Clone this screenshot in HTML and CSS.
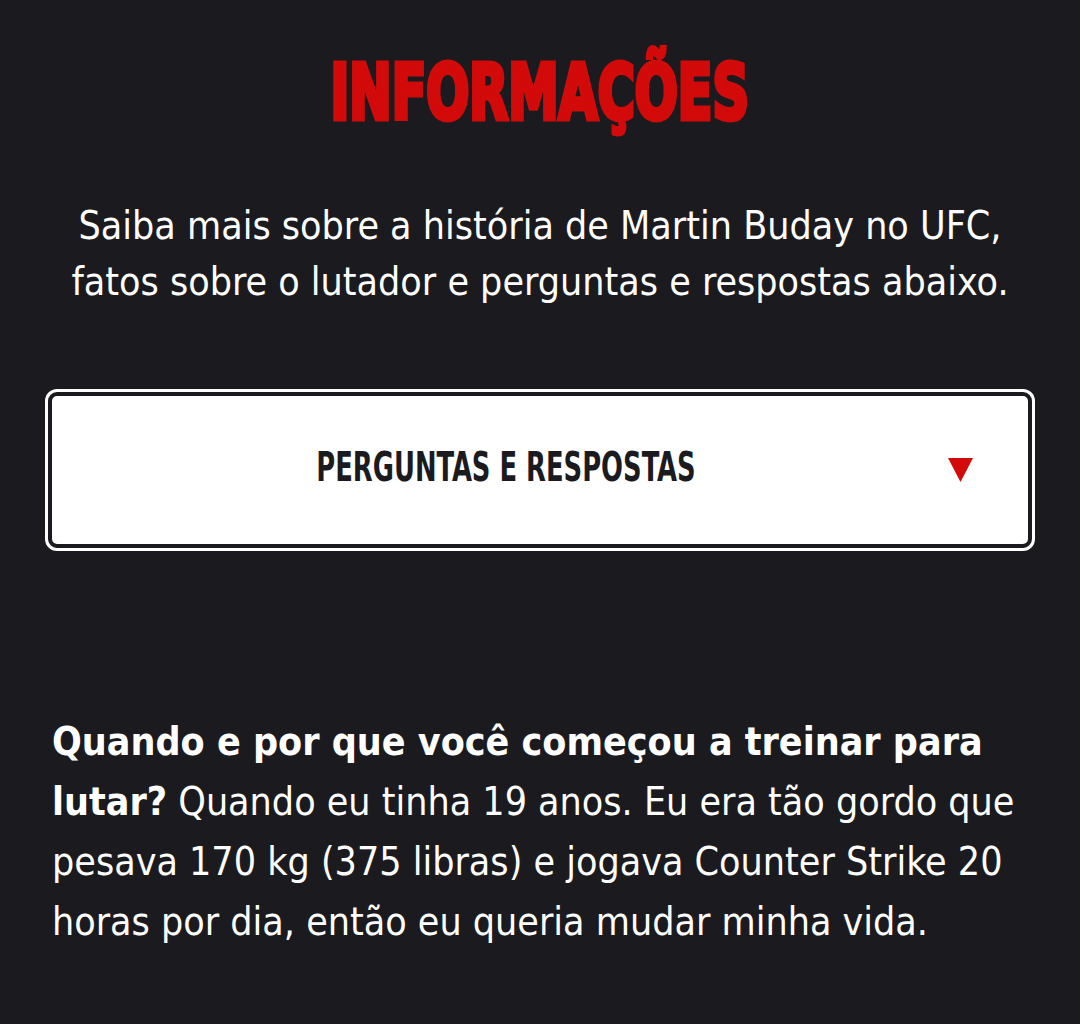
FILE: index.html
```html
<!DOCTYPE html>
<html lang="pt-BR">
<head>
<meta charset="utf-8">
<title>Informações</title>
<link rel="stylesheet" href="styles.css">
</head>
<body>
<main class="info">
  <h2 class="info-title"><span class="info-title-text">INFORMAÇÕES</span></h2>
  <p class="info-intro">Saiba mais sobre a história de Martin Buday no UFC, fatos sobre o lutador e perguntas e respostas abaixo.</p>
  <button class="accordion" type="button">
    <span class="accordion-label">PERGUNTAS E RESPOSTAS</span>
    <svg class="accordion-arrow" viewBox="0 0 25 24" width="25" height="24" aria-hidden="true">
      <polygon points="0,0 25,0 12.5,24" fill="#d20a0a"/>
    </svg>
  </button>
  <p class="qa"><strong>Quando e por que você começou a treinar para lutar?</strong> Quando eu tinha 19 anos. Eu era tão gordo que pesava 170 kg (375 libras) e jogava Counter Strike 20 horas por dia, então eu queria mudar minha vida.</p>
</main>
</body>
</html>
```
FILE: styles.css
```css
html, body {
  margin: 0;
  background: #1b1b1f;
}

body {
  color: #ffffff;
  font-family: "DejaVu Sans Condensed", "DejaVu Sans", sans-serif;
  font-stretch: condensed;
}

.info {
  padding: 55px 48px 60px;
  display: flex;
  flex-direction: column;
}

/* heavy, narrow display heading */
.info-title {
  margin: 0;
  text-align: center;
  color: #d20a0a;
  font-size: 76px;
  font-weight: 700;
  line-height: 1;
}

.info-title-text {
  display: inline-block;
  transform: scaleX(0.74);
  -webkit-text-stroke: 5px #d20a0a;
}

.info-intro {
  margin: 67px 20px 0;
  text-align: center;
  font-size: 39px;
  line-height: 56px;
}

.accordion {
  box-sizing: border-box;
  margin-top: 82px;
  height: 156px;
  padding: 0 0 6px;
  display: flex;
  align-items: center;
  justify-content: center;
  position: relative;
  background: #ffffff;
  border: 4px solid #1b1b1f;
  border-radius: 9px;
  box-shadow: 0 0 0 3px #ffffff;
  font-family: inherit;
  font-stretch: condensed;
  cursor: pointer;
}

.accordion-label {
  display: inline-block;
  color: #1b1b1f;
  font-size: 41px;
  font-weight: 700;
  margin-right: 68px;
  transform: scaleX(0.7);
}

.accordion-arrow {
  position: absolute;
  right: 55px;
  top: 62px;
}

.qa {
  margin: 164px 4px 0;
  font-size: 39px;
  line-height: 60px;
}

.qa strong {
  font-weight: 700;
}
```
